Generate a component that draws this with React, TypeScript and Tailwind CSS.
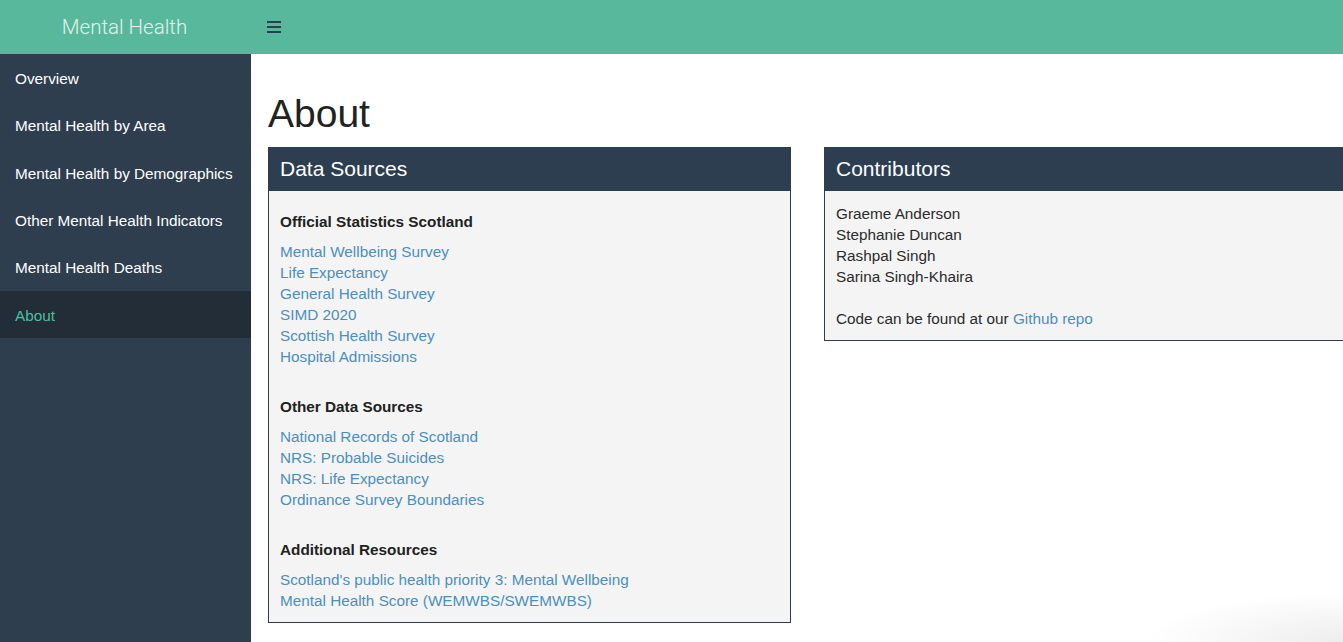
const linkCls = "text-[#4a8fc2] leading-[21px]";

const officialStats = [
  "Mental Wellbeing Survey",
  "Life Expectancy",
  "General Health Survey",
  "SIMD 2020",
  "Scottish Health Survey",
  "Hospital Admissions",
];

const otherSources = [
  "National Records of Scotland",
  "NRS: Probable Suicides",
  "NRS: Life Expectancy",
  "Ordinance Survey Boundaries",
];

const additional = [
  "Scotland's public health priority 3: Mental Wellbeing",
  "Mental Health Score (WEMWBS/SWEMWBS)",
];

const menu = [
  "Overview",
  "Mental Health by Area",
  "Mental Health by Demographics",
  "Other Mental Health Indicators",
  "Mental Health Deaths",
  "About",
];

const Section = ({ title, links, first }: { title: string; links: string[]; first?: boolean }) => (
  <div className={first ? "" : "mt-[29px]"}>
    <h4 className="font-bold text-[#222] leading-[21px] mb-[9px]">{title}</h4>
    <div className="flex flex-col">
      {links.map((l) => (
        <a key={l} className={linkCls}>
          {l}
        </a>
      ))}
    </div>
  </div>
);

const Box = ({ title, children, className }: { title: string; children: React.ReactNode; className?: string }) => (
  <div className={"border border-[#2c3e50] bg-[#f4f4f4] shrink-0 " + (className ?? "")}>
    <div className="h-[43px] bg-[#2c3e50] flex items-center px-[11px] pb-[2px]">
      <h3 className="text-white text-[21px] leading-none">{title}</h3>
    </div>
    {children}
  </div>
);

const App = () => {
  return (
    <div
      className="relative w-[1343px] h-[642px] overflow-hidden bg-white text-[15.3px] text-[#2b2b2b]"
      style={{ fontFamily: '"Liberation Sans", Arial, sans-serif' }}
    >
      <header className="h-[54px] bg-[#58b89c] flex items-center">
        <div className="w-[251px] flex justify-center pr-[2px]">
          <span className="text-[20.5px] font-light text-[#e2f3ed]" style={{ fontFamily: "Roboto, sans-serif" }}>
            Mental Health
          </span>
        </div>
        <div className="ml-[16px] flex items-center">
          <svg width="14" height="12" viewBox="0 0 14 12">
            <rect x="0" y="0" width="14" height="2" fill="#2c3e50" />
            <rect x="0" y="5" width="14" height="2" fill="#2c3e50" />
            <rect x="0" y="10" width="14" height="2" fill="#2c3e50" />
          </svg>
        </div>
      </header>

      <div className="flex h-[588px]">
        <aside className="w-[251px] shrink-0 bg-[#2e3e4f]">
          {menu.map((m) => (
            <div
              key={m}
              className={
                "h-[47.4px] flex items-center px-[15px] pt-[3px] " +
                (m === "About" ? "bg-[#222d38] text-[#4fbf9f]" : "text-white")
              }
            >
              {m}
            </div>
          ))}
        </aside>

        <main className="flex-1 pl-[17px] pt-[38px]">
          <h1 className="text-[39px] leading-[43px] text-[#222] mb-[12px]">About</h1>
          <div className="flex gap-[33px]">
            <Box title="Data Sources" className="w-[523px]">
              <div className="px-[11px] pt-[20px] pb-[11px]">
                <Section title="Official Statistics Scotland" links={officialStats} first />
                <Section title="Other Data Sources" links={otherSources} />
                <Section title="Additional Resources" links={additional} />
              </div>
            </Box>
            <Box title="Contributors" className="w-[523px] self-start">
              <div className="px-[11px] pt-[12px] pb-[11px] leading-[21px]">
                <p>Graeme Anderson</p>
                <p>Stephanie Duncan</p>
                <p>Rashpal Singh</p>
                <p>Sarina Singh-Khaira</p>
                <p className="mt-[21px]">
                  Code can be found at our <a className="text-[#4a8fc2]">Github repo</a>
                </p>
              </div>
            </Box>
          </div>
        </main>
      </div>

      <div className="absolute right-0 bottom-0 w-[200px] h-[50px] bg-[radial-gradient(ellipse_at_bottom_right,rgba(0,0,0,0.07),transparent_70%)]" />
    </div>
  );
};

export default App;
